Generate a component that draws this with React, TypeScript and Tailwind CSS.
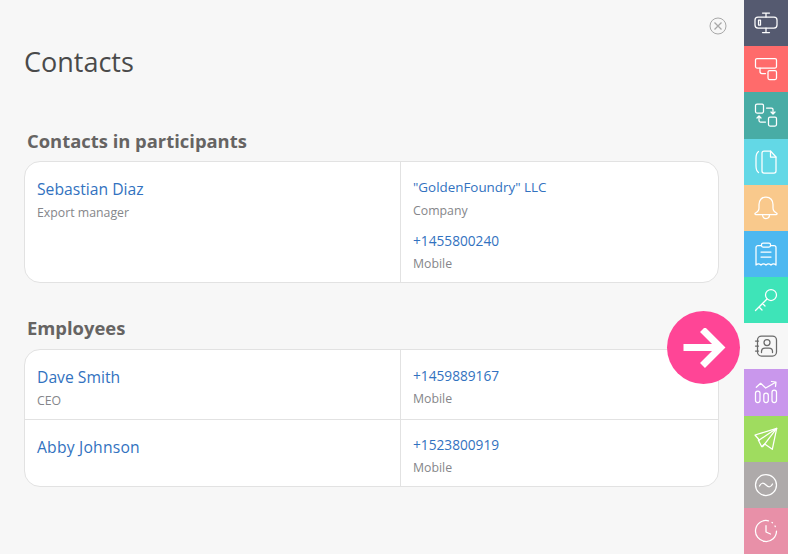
import type { ReactNode } from 'react';

const font = { fontFamily: '"Open Sans", sans-serif' };

function Icon({ children }: { children: ReactNode }) {
  return (
    <svg width="24" height="24" viewBox="0 0 24 24" fill="none" stroke="currentColor" strokeWidth="1.25" strokeLinecap="round" strokeLinejoin="round">
      {children}
    </svg>
  );
}

const rail: { bg: string; color?: string; icon: ReactNode }[] = [
  {
    bg: 'bg-[#555a70]',
    icon: (
      <>
        <rect x="1" y="6" width="22" height="11" rx="3" />
        <path d="M8.500 2h7M8.500 21.500h7M12 2v4M12 17v4.500M4.500 9v5h2V9z" />
      </>
    ),
  },
  {
    bg: 'bg-[#ff6b6b]',
    icon: (
      <>
        <path d="M3 1.500h18A1.500 1.500 0 0 1 22.500 3v6.500A1.500 1.500 0 0 1 21 11H3a1.500 1.500 0 0 1-1.500-1.500V3A1.500 1.500 0 0 1 3 1.500z" />
        <rect x="14" y="13.500" width="8.500" height="9" rx="1.500" />
        <path d="M6 11v3.500a2 2 0 0 0 2 2h3.500" />
      </>
    ),
  },
  {
    bg: 'bg-[#48aca5]',
    icon: (
      <>
        <rect x="1.500" y="1" width="8" height="9" rx="1.500" />
        <rect x="14.500" y="14" width="8" height="9" rx="1.500" />
        <path d="M12.500 5h5a1.500 1.500 0 0 1 1.500 1.500V11M17 9l2 2.200L21 9M11.500 19h-5A1.500 1.500 0 0 1 5 17.500V13M3 15l2-2.200L7 15" />
      </>
    ),
  },
  {
    bg: 'bg-[#63d8e6]',
    icon: (
      <>
        <path d="M10 1h6.500l5.500 6v14a2 2 0 0 1-2 2H10a2 2 0 0 1-2-2V3a2 2 0 0 1 2-2z" />
        <path d="M16.500 1v6H22M4.500 1.500C2.500 3 2 5.500 2 8v8c0 2.500.5 5 2.500 6.500" />
      </>
    ),
  },
  {
    bg: 'bg-[#f9c98c]',
    icon: (
      <>
        <path d="M12 1c-4.500 0-7 3.500-7 7.500V12c0 2.500-1.500 4-3.500 5-1 .5-.6 1.500.5 1.500h20c1.100 0 1.500-1 .5-1.500-2-1-3.500-2.500-3.500-5V8.500C19 4.500 16.500 1 12 1z" />
        <path d="M8.500 18.500c0 2.500 1.500 4 3.500 4s3.500-1.500 3.500-4" />
      </>
    ),
  },
  {
    bg: 'bg-[#4db8f0]',
    icon: (
      <>
        <path d="M7.500 3.500H4a2 2 0 0 0-2 2v17.500c1.700-1.500 3.300-1.500 5 0 1.700-1.500 3.300-1.500 5 0 1.700-1.500 3.300-1.500 5 0 1.700-1.500 3.300-1.500 5 0V5.500a2 2 0 0 0-2-2h-3.500" />
        <rect x="7.500" y="1" width="9" height="4" rx="1.500" />
        <path d="M7 10h10M7 15h10" />
      </>
    ),
  },
  {
    bg: 'bg-[#3ee4b8]',
    icon: (
      <>
        <circle cx="17" cy="7" r="5.500" />
        <path d="M13 11 1.500 22.500M5 19l3 3M8.500 15.500l2.500 2.500" />
      </>
    ),
  },
  {
    bg: 'bg-[#f7f7f7]',
    color: 'text-[#6b6b6b]',
    icon: (
      <>
        <rect x="3.500" y="2" width="19" height="20" rx="4" />
        <circle cx="13" cy="8.500" r="3" />
        <path d="M7.500 18.500v-1c0-2 1.500-3.500 3.500-3.500h4c2 0 3.500 1.500 3.500 3.500v1M1.500 7h3M1.500 12h3M1.500 17h3" />
      </>
    ),
  },
  {
    bg: 'bg-[#c997ec]',
    icon: (
      <>
        <path d="M2.300 7.300 6.600 3.300 11.700 8l10-5.700M17.500 1.500l4.500.5-.5 4.500" />
        <rect x="1.500" y="11" width="4.500" height="11.500" rx="2.200" />
        <rect x="9.800" y="13" width="4.500" height="9.500" rx="2.200" />
        <rect x="18" y="10" width="4.500" height="12.500" rx="2.200" />
      </>
    ),
  },
  {
    bg: 'bg-[#9fdc5f]',
    icon: (
      <>
        <path d="M22.700 1.300 1 8l4.300 5-1 0 3.400 6.700 3-2.700 7.600 5.300z" />
        <path d="M22.700 1.300 5.300 13M22.700 1.300 8.700 19.700" />
      </>
    ),
  },
  {
    bg: 'bg-[#aeaaaa]',
    icon: (
      <>
        <circle cx="12" cy="12" r="10.500" />
        <path d="M5.500 13c1.500-3.500 4-3.500 6.500-1s5 2.500 6.500-1" />
      </>
    ),
  },
  {
    bg: 'bg-[#e890a8]',
    icon: (
      <>
        <path d="M14.500 1.800A10.500 10.500 0 1 0 22.500 12" />
        <path d="M18 3.500l.5.300M21 7l.3.6M12 6.500V13l4.500 2" />
      </>
    ),
  },
];

function Name({ children, className }: { children: ReactNode; className?: string }) {
  return <div className={`text-[15.7px] leading-[22px] text-[#3272c0] ${className ?? ''}`}>{children}</div>;
}

function Sub({ children, className }: { children: ReactNode; className?: string }) {
  return <div className={`text-[12.3px] leading-4 text-[#85868a] ${className ?? ''}`}>{children}</div>;
}

function Value({ children, className }: { children: ReactNode; className?: string }) {
  return <div className={`text-[13.4px] leading-[18px] text-[#3272c0] ${className ?? ''}`}>{children}</div>;
}

export default function App() {
  return (
    <div style={font} className="relative flex h-[554px] w-[788px] overflow-hidden bg-[#f7f7f7]">
      <main className="relative flex-1 pl-6 pr-[25px]">
        <button className="absolute right-[17px] top-[17px] text-[#a8a8a8]" aria-label="close">
          <svg width="18" height="18" viewBox="0 0 18 18" fill="none" stroke="currentColor" strokeWidth="1">
            <circle cx="9" cy="9" r="8" />
            <path d="M5.500 5.500l7 7M12.500 5.500l-7 7" strokeWidth="1.300" />
          </svg>
        </button>

        <h1 className="pt-[42px] text-[27px] leading-10 text-[#4a4a4a]">Contacts</h1>

        <h2 className="mt-[45px] pl-[3px] text-[18.4px] font-bold leading-7 text-[#666463]">Contacts in participants</h2>
        <section className="mt-1.5 h-[122px] rounded-2xl border border-[#e2e2e2] bg-white">
          <div className="grid h-full grid-cols-[376px_1fr]">
            <div className="border-r border-[#e2e2e2] pl-3 pt-4">
              <Name>Sebastian Diaz</Name>
              <Sub className="mt-[5px]">Export manager</Sub>
            </div>
            <div className="pl-3 pt-4">
              <Value>"GoldenFoundry" LLC</Value>
              <Sub className="mt-[7px]">Company</Sub>
              <div className="mt-[13px]">
                <Value className="text-[13.7px]">+1455800240</Value>
              </div>
              <Sub className="mt-1.5">Mobile</Sub>
            </div>
          </div>
        </section>

        <h2 className="mt-[31px] pl-[3px] text-[18.4px] font-bold leading-7 text-[#666463]">Employees</h2>
        <section className="mt-[7px] rounded-2xl border border-[#e2e2e2] bg-white">
          <div className="grid h-[70px] grid-cols-[376px_1fr] border-b border-[#e2e2e2]">
            <div className="border-r border-[#e2e2e2] pl-3 pt-4">
              <Name>Dave Smith</Name>
              <Sub className="mt-[5px]">CEO</Sub>
            </div>
            <div className="pl-3 pt-[17px]">
              <Value className="text-[13.7px]">+1459889167</Value>
              <Sub className="mt-1.5">Mobile</Sub>
            </div>
          </div>
          <div className="grid h-[66px] grid-cols-[376px_1fr]">
            <div className="border-r border-[#e2e2e2] pl-3 pt-4">
              <Name className="tracking-[0.2px]">Abby Johnson</Name>
            </div>
            <div className="pl-3 pt-4">
              <Value className="text-[13.7px]">+1523800919</Value>
              <Sub className="mt-1.5">Mobile</Sub>
            </div>
          </div>
        </section>
      </main>

      <nav className="flex h-full w-11 flex-col">
        {rail.map((item, i) => (
          <div key={i} className={`flex flex-1 items-center justify-center ${item.bg} ${item.color ?? 'text-white'}`}>
            <Icon>{item.icon}</Icon>
          </div>
        ))}
      </nav>

      <div className="absolute left-[667px] top-[311px] flex h-[73px] w-[73px] items-center justify-center rounded-full bg-[#ff4596]">
        <svg width="46" height="40" viewBox="0 0 46 40" fill="none" stroke="white" strokeWidth="7">
          <path d="M2.500 19.500H39M21.500 1.500l18 18-18 18" />
        </svg>
      </div>
    </div>
  );
}
